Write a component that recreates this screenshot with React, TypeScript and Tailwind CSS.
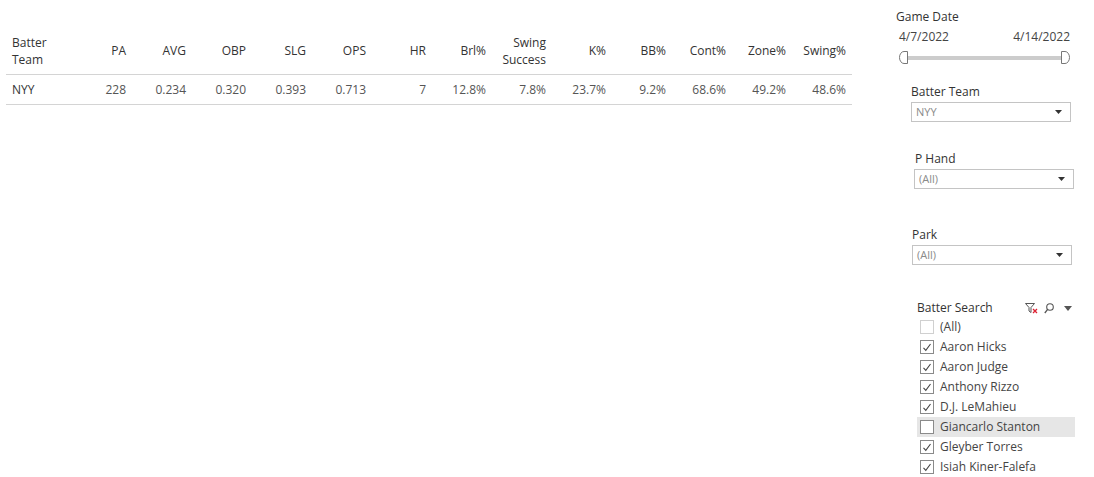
import React from "react";

const cols = [
  { h: ["PA"], v: "228" },
  { h: ["AVG"], v: "0.234" },
  { h: ["OBP"], v: "0.320" },
  { h: ["SLG"], v: "0.393" },
  { h: ["OPS"], v: "0.713" },
  { h: ["HR"], v: "7" },
  { h: ["Brl%"], v: "12.8%" },
  { h: ["Swing", "Success"], v: "7.8%" },
  { h: ["K%"], v: "23.7%" },
  { h: ["BB%"], v: "9.2%" },
  { h: ["Cont%"], v: "68.6%" },
  { h: ["Zone%"], v: "49.2%" },
  { h: ["Swing%"], v: "48.6%" },
];

const batters = [
  { name: "(All)", checked: false, all: true },
  { name: "Aaron Hicks", checked: true },
  { name: "Aaron Judge", checked: true },
  { name: "Anthony Rizzo", checked: true },
  { name: "D.J. LeMahieu", checked: true },
  { name: "Giancarlo Stanton", checked: false, hover: true },
  { name: "Gleyber Torres", checked: true },
  { name: "Isiah Kiner-Falefa", checked: true },
];

function Dropdown({ value }: { value: string }) {
  return (
    <div className="flex h-[20px] w-[160px] items-center justify-between border border-[#c4c4c4] bg-white pl-[4px] pr-[8px]">
      <span className="text-[11px] text-[#8a8a8a]">{value}</span>
      <svg width="7" height="4" viewBox="0 0 7 4">
        <path d="M0 0H7L3.5 4Z" fill="#333" />
      </svg>
    </div>
  );
}

function Handle({ side }: { side: "left" | "right" }) {
  const d =
    side === "left"
      ? "M8.5 0.5H5A4.5 6 0 0 0 0.5 6.5A4.5 6 0 0 0 5 12.5H8.5Z"
      : "M0.5 0.5H4A4.5 6 0 0 1 8.5 6.5A4.5 6 0 0 1 4 12.5H0.5Z";
  return (
    <svg width="9" height="13" viewBox="0 0 9 13" className="shrink-0">
      <path d={d} fill="#fff" stroke="#777" strokeWidth="1" />
    </svg>
  );
}

export default function App() {
  return (
    <div
      className="flex h-[477px] w-[1094px] bg-white text-[12px] text-[#333]"
      style={{ fontFamily: '"Open Sans", "Noto Sans", sans-serif' }}
    >
      {/* table */}
      <div className="ml-[6px] mt-[31px] w-[846px]">
        <div className="flex h-[44px] items-center border-b border-[#d4d4d4] pb-[4px] leading-[17px]">
          <div className="w-[66px] pl-[6px]">
            <div>Batter</div>
            <div>Team</div>
          </div>
          {cols.map((c) => (
            <div key={c.h.join()} className="w-[60px] pr-[6px] text-right">
              {c.h.map((l) => (
                <div key={l}>{l}</div>
              ))}
            </div>
          ))}
        </div>
        <div className="flex h-[30px] items-center border-b border-[#d4d4d4] text-[#555]">
          <div className="w-[66px] pl-[6px] text-[#333]">NYY</div>
          {cols.map((c) => (
            <div key={c.h.join()} className="w-[60px] pr-[6px] text-right">
              {c.v}
            </div>
          ))}
        </div>
      </div>

      {/* filters */}
      <div className="ml-[38px] flex flex-col">
        <div className="ml-[6px] mt-[9px] leading-[16px]">Game Date</div>
        <div className="ml-[9px] mt-[4px] flex w-[171px] justify-between leading-[16px] text-[#444]">
          <span>4/7/2022</span>
          <span>4/14/2022</span>
        </div>
        <div className="ml-[9px] mt-[6px] flex w-[171px] items-center">
          <Handle side="left" />
          <div className="h-[4px] flex-1 bg-[#cccccc]" />
          <Handle side="right" />
        </div>

        <div className="ml-[21px] mt-[20px] leading-[16px]">Batter Team</div>
        <div className="ml-[21px] mt-[2px]">
          <Dropdown value="NYY" />
        </div>

        <div className="ml-[25px] mt-[29px] leading-[16px]">P Hand</div>
        <div className="ml-[24px] mt-[2px]">
          <Dropdown value="(All)" />
        </div>

        <div className="ml-[22px] mt-[38px] leading-[16px]">Park</div>
        <div className="ml-[22px] mt-[2px]">
          <Dropdown value="(All)" />
        </div>

        <div className="ml-[27px] mt-[35px] flex w-[155px] items-center justify-between leading-[16px]">
          <span>Batter Search</span>
          <span className="flex items-center gap-[6px]">
            <svg width="13" height="11" viewBox="0 0 13 11">
              <path d="M0.5 0.5H9.5L6 4.5V9.5L4 8V4.5Z" fill="none" stroke="#555" strokeWidth="1" />
              <path d="M8 6L12 10M12 6L8 10" stroke="#d23" strokeWidth="1.3" />
            </svg>
            <svg width="10" height="11" viewBox="0 0 10 11">
              <circle cx="6" cy="4" r="3.3" fill="none" stroke="#555" strokeWidth="1.1" />
              <path d="M3.6 6.4L0.8 10" stroke="#555" strokeWidth="1.3" />
            </svg>
            <svg width="8" height="5" viewBox="0 0 8 5" className="ml-[4px]">
              <path d="M0 0H8L4 5Z" fill="#555" />
            </svg>
          </span>
        </div>
        <div className="ml-[27px] mt-[1px] flex w-[158px] flex-col">
          {batters.map((b) => (
            <div
              key={b.name}
              className={`flex h-[20px] items-center ${b.hover ? "bg-[#e6e6e6]" : ""}`}
            >
              <div
                className={`ml-[3px] flex h-[14px] w-[14px] items-center justify-center border bg-white ${
                  b.all ? "border-[#d0d0d0]" : "border-[#8a8a8a]"
                }`}
              >
                {b.checked && (
                  <svg width="10" height="9" viewBox="0 0 10 9">
                    <path d="M1.5 4.8L3.8 7.3L8.5 1" fill="none" stroke="#444" strokeWidth="1.1" />
                  </svg>
                )}
              </div>
              <span className="ml-[6px] text-[#444]">{b.name}</span>
            </div>
          ))}
        </div>
      </div>
    </div>
  );
}
